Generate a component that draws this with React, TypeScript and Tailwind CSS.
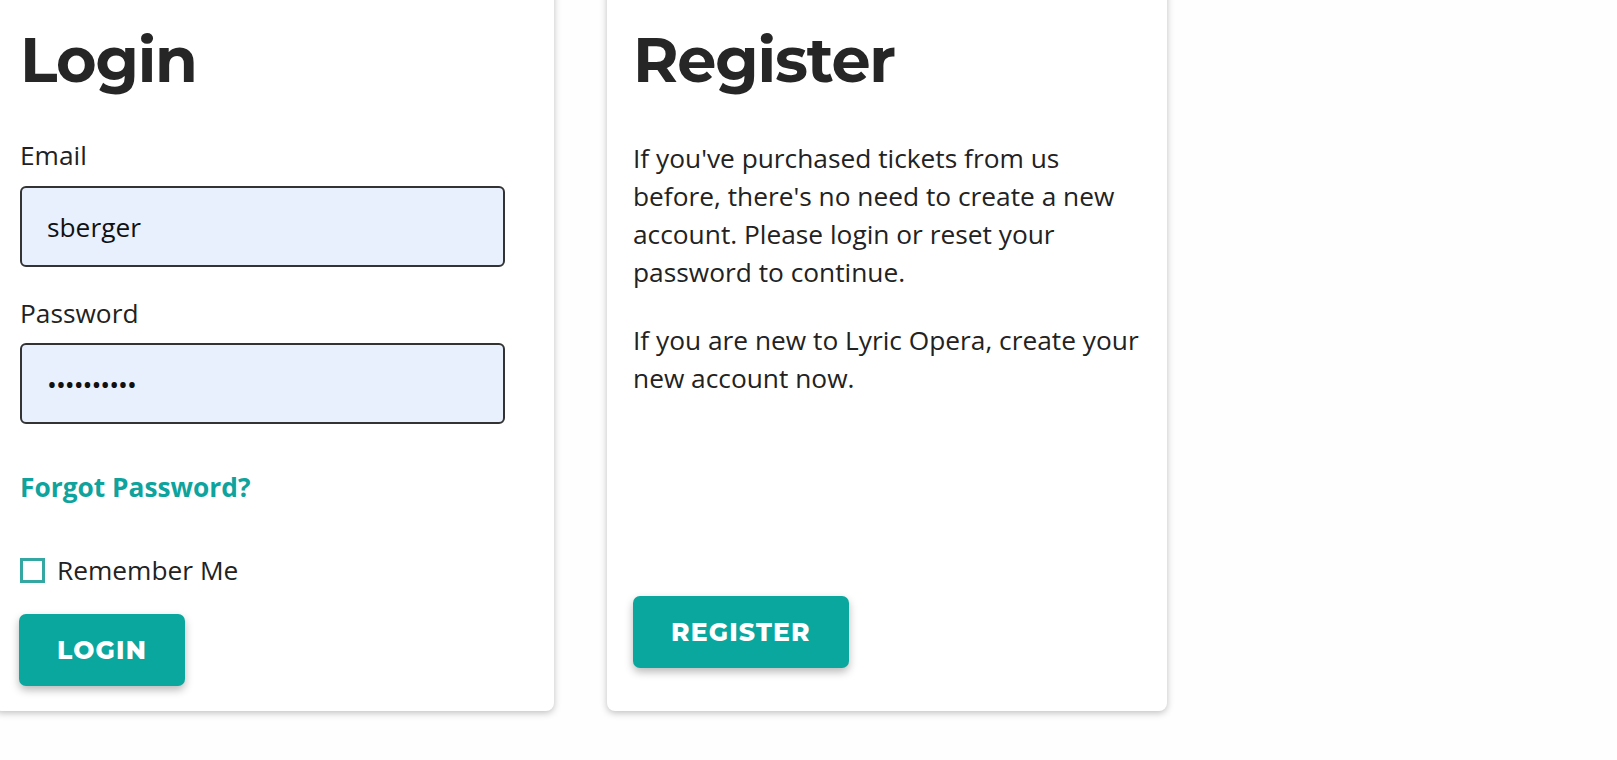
import React from "react";

const heading = "font-['Montserrat','Inter',sans-serif] font-bold text-[62px] leading-[1.2] text-[#262626] tracking-[-1.2px]";
const body = "font-['Open_Sans',sans-serif] text-[26.3px] leading-[38px] text-[#222]";
const button =
  "h-[72px] rounded-[7px] bg-[#0aa79f] px-[38px] font-['Montserrat','Inter',sans-serif] font-extrabold text-[25px] uppercase tracking-[1.2px] text-white shadow-[0_4px_8px_rgba(0,0,0,0.28)]";
const input =
  "block h-[81px] w-[485px] rounded-[6px] border-2 border-[#333] bg-[#e8f0fe] px-[25px] outline-none font-['Open_Sans',sans-serif] text-[26.3px] text-[#111]";

export default function App() {
  return (
    <div className="h-[760px] w-full overflow-hidden bg-[#fefefe]">
      <div className="ml-[-6px] mt-[-20px] flex gap-[53px]">
        {/* Login card */}
        <div className="h-[731px] w-[560px] rounded-lg bg-white px-[26px] pt-[43px] shadow-[0_2px_7px_rgba(0,0,0,0.25)]">
          <h1 className={heading}>Login</h1>

          <label className={`mt-[39px] block ${body}`}>Email</label>
          <input type="text" readOnly defaultValue="sberger" className={`mt-[12px] ${input}`} />

          <label className={`mt-[27px] block ${body}`}>Password</label>
          <input
            type="password"
            readOnly
            defaultValue="lyricopera"
            className={`mt-[11px] tracking-[-1px] ${input}`}
          />

          <a href="#" className="mt-[44px] block font-['Open_Sans',sans-serif] text-[26.3px] leading-[38px] font-bold text-[#0fa39d]">
            Forgot Password?
          </a>

          <label className="mt-[45px] flex items-center gap-[12px]">
            <span className="block h-[25px] w-[25px] border-[3px] border-[#35a7a3] bg-white" />
            <span className={body}>Remember Me</span>
          </label>

          <button className={`mt-[25px] ml-[-1px] ${button}`}>Login</button>
        </div>

        {/* Register card */}
        <div className="h-[731px] w-[560px] rounded-lg bg-white px-[26px] pt-[43px] shadow-[0_2px_7px_rgba(0,0,0,0.25)]">
          <h1 className={heading}>Register</h1>

          <p className={`mt-[42px] w-[510px] ${body}`}>
            If you've purchased tickets from us before, there's no need to create a new account. Please login or reset your
            password to continue.
          </p>
          <p className={`mt-[30px] w-[510px] ${body}`}>
            If you are new to Lyric Opera, create your new account now.
          </p>

          <button className={`mt-[199px] ${button}`}>Register</button>
        </div>
      </div>
    </div>
  );
}
